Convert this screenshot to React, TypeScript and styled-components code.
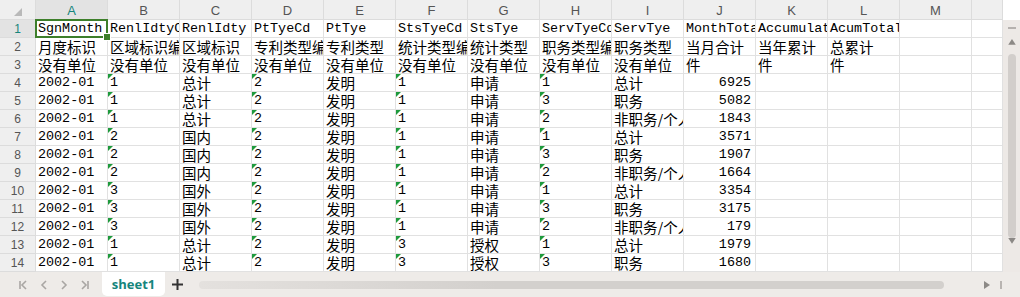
import React from 'react';
import styled, { createGlobalStyle, css } from 'styled-components';

const GlobalStyle = createGlobalStyle`
  html, body { margin: 0; padding: 0; background: #fff; }
  body { width: 1020px; height: 297px; overflow: hidden; }
`;

const COLS = ['A', 'B', 'C', 'D', 'E', 'F', 'G', 'H', 'I', 'J', 'K', 'L', 'M'];
const GRID_LINE = '#e1e1e1';
const TEAL = '#16857c';

// which columns hold numbers stored as text (green corner marks)
const TEXT_NUM_COLS = [1, 3, 5, 7];

const rows: string[][] = [
    ['SgnMonth', 'RenlIdtyCd', 'RenlIdty', 'PtTyeCd', 'PtTye', 'StsTyeCd', 'StsTye', 'ServTyeCd', 'ServTye', 'MonthTotal', 'Accumulated', 'AcumTotal', ''],
    ['月度标识', '区域标识编码', '区域标识', '专利类型编码', '专利类型', '统计类型编码', '统计类型', '职务类型编码', '职务类型', '当月合计', '当年累计', '总累计', ''],
    ['没有单位', '没有单位', '没有单位', '没有单位', '没有单位', '没有单位', '没有单位', '没有单位', '没有单位', '件', '件', '件', ''],
    ['2002-01', '1', '总计', '2', '发明', '1', '申请', '1', '总计', '6925', '', '', ''],
    ['2002-01', '1', '总计', '2', '发明', '1', '申请', '3', '职务', '5082', '', '', ''],
    ['2002-01', '1', '总计', '2', '发明', '1', '申请', '2', '非职务/个人', '1843', '', '', ''],
    ['2002-01', '2', '国内', '2', '发明', '1', '申请', '1', '总计', '3571', '', '', ''],
    ['2002-01', '2', '国内', '2', '发明', '1', '申请', '3', '职务', '1907', '', '', ''],
    ['2002-01', '2', '国内', '2', '发明', '1', '申请', '2', '非职务/个人', '1664', '', '', ''],
    ['2002-01', '3', '国外', '2', '发明', '1', '申请', '1', '总计', '3354', '', '', ''],
    ['2002-01', '3', '国外', '2', '发明', '1', '申请', '3', '职务', '3175', '', '', ''],
    ['2002-01', '3', '国外', '2', '发明', '1', '申请', '2', '非职务/个人', '179', '', '', ''],
    ['2002-01', '1', '总计', '2', '发明', '3', '授权', '1', '总计', '1979', '', '', ''],
    ['2002-01', '1', '总计', '2', '发明', '3', '授权', '3', '职务', '1680', '', '', ''],
];

const Page = styled.div`
  width: 1020px;
  height: 297px;
  display: flex;
  flex-direction: column;
  font-family: "Liberation Sans", "Noto Sans", sans-serif;
`;

const Body = styled.div`
  display: flex;
  height: 272px;
`;

const Sheet = styled.div`
  flex: 1;
  display: grid;
  grid-template-columns: 36px repeat(13, 72px) 31px;
  grid-template-rows: 20px repeat(14, 18px);
  overflow: hidden;
`;

const Corner = styled.div`
  background: #efefef;
  border-right: 1px solid #dcdcdc;
  border-bottom: 1px solid #dcdcdc;
  display: flex;
  align-items: center;
  justify-content: center;
  svg { margin: 4px 0 0 0; }
`;

const ColHead = styled.div<{ $active?: boolean }>`
  box-sizing: border-box;
  background: ${p => (p.$active ? '#e3e3e3' : '#efefef')};
  color: ${p => (p.$active ? TEAL : '#555')};
  border-right: 1px solid #dcdcdc;
  border-bottom: 1px solid #dcdcdc;
  font-size: 13px;
  display: flex;
  align-items: center;
  justify-content: center;
  padding-top: 1px;
`;

const RowHead = styled.div<{ $active?: boolean }>`
  box-sizing: border-box;
  background: ${p => (p.$active ? '#e3e3e3' : '#efefef')};
  color: ${p => (p.$active ? TEAL : '#555')};
  border-right: 1px solid #dcdcdc;
  border-bottom: 1px solid #dcdcdc;
  font-size: 12px;
  display: flex;
  align-items: center;
  justify-content: center;
`;

const Cell = styled.div<{ $cjk?: boolean; $right?: boolean; $flag?: boolean }>`
  position: relative;
  box-sizing: border-box;
  height: 18px;
  border-right: 1px solid ${GRID_LINE};
  border-bottom: 1px solid ${GRID_LINE};
  padding: 1px 4px 0 2px;
  display: flex;
  align-items: center;
  justify-content: ${p => (p.$right ? 'flex-end' : 'flex-start')};
  white-space: nowrap;
  overflow: hidden;
  color: #000;
  line-height: 1;
  font-family: ${p => (p.$cjk
        ? '"Noto Sans CJK SC", "Liberation Mono", sans-serif'
        : '"Liberation Mono", "Noto Sans CJK SC", monospace')};
  font-size: ${p => (p.$cjk ? '14.5px' : '13.4px')};
  ${p => p.$flag && css`
    &::before {
      content: '';
      position: absolute;
      left: 0;
      top: 0;
      border-top: 5px solid #1e9a3c;
      border-right: 5px solid transparent;
    }
  `}
`;

const Selected = styled.div`
  position: absolute;
  left: -1px;
  top: -1px;
  right: -1px;
  bottom: -1px;
  border: 2px solid #3d7f2a;
  pointer-events: none;
  &::after {
    content: '';
    position: absolute;
    right: -5px;
    bottom: -5px;
    width: 6px;
    height: 6px;
    background: #3d7f2a;
    border: 1px solid #fff;
  }
`;

const AnchorCell = styled(Cell)`
  overflow: visible;
  z-index: 2;
  span { display: block; overflow: hidden; }
`;

const VScroll = styled.div`
  width: 17px;
  margin-top: 20px;
  background: #ede9e6;
  display: flex;
  flex-direction: column;
  align-items: center;
`;

const Dash = styled.div`
  width: 8px;
  height: 2px;
  background: #b5b1ae;
  margin-top: 7px;
`;

const VThumb = styled.div`
  width: 8px;
  height: 196px;
  margin-top: 9px;
  border-radius: 4px;
  background: #d2cecb;
`;

const TabBar = styled.div`
  height: 25px;
  background: #eeebe8;
  display: flex;
  align-items: flex-start;
`;

const NavGroup = styled.div`
  width: 102px;
  height: 25px;
  display: flex;
  align-items: center;
  padding-left: 14px;
  box-sizing: border-box;
`;

const NavBtn = styled.div`
  width: 20px;
  height: 20px;
  display: flex;
  align-items: center;
  justify-content: center;
`;

const Tab = styled.div`
  width: 63px;
  height: 24px;
  background: #fff;
  border-radius: 0 0 5px 5px;
  color: ${TEAL};
  font-family: "Open Sans", "Noto Sans", sans-serif;
  font-weight: 700;
  font-size: 13px;
  display: flex;
  align-items: center;
  justify-content: center;
`;

const AddTab = styled.div`
  width: 24px;
  height: 25px;
  display: flex;
  align-items: center;
  justify-content: center;
`;

const HTrack = styled.div`
  flex: 1;
  height: 25px;
  display: flex;
  align-items: center;
  padding-left: 10px;
`;

const HThumb = styled.div`
  width: 745px;
  height: 8px;
  border-radius: 4px;
  background: linear-gradient(to right, #e4e1de 0%, #d3d0cd 40%, #d3d0cd 100%);
`;

const HEnd = styled.div`
  width: 55px;
  display: flex;
  align-items: center;
  justify-content: flex-end;
  gap: 10px;
  padding-right: 18px;
  height: 25px;
`;

const Bar = styled.div`
  width: 2px;
  height: 8px;
  background: #b8b4b1;
`;

const Chevron = ({ dir, bar }: { dir: 'l' | 'r'; bar?: boolean }) => (
    <svg width="12" height="12" viewBox="0 0 12 12">
        {dir === 'l' ? (
            <>
                {bar && <line x1="2" y1="2" x2="2" y2="10" stroke="#a9a6a3" strokeWidth="1.6" />}
                <polyline points="8,2 4,6 8,10" fill="none" stroke="#a9a6a3" strokeWidth="1.6" />
            </>
        ) : (
            <>
                <polyline points="4,2 8,6 4,10" fill="none" stroke="#a9a6a3" strokeWidth="1.6" />
                {bar && <line x1="10" y1="2" x2="10" y2="10" stroke="#a9a6a3" strokeWidth="1.6" />}
            </>
        )}
    </svg>
);

const hasCjk = (s: string) => /[\u4e00-\u9fff]/.test(s);

export default function App() {
    return (
        <Page>
            <GlobalStyle />
            <Body>
                <Sheet>
                    <Corner>
                        <svg width="8" height="8" viewBox="0 0 8 8"><polygon points="8,0 8,8 0,8" fill="#b9b9b9" /></svg>
                    </Corner>
                    {COLS.map((c, i) => <ColHead key={c} $active={i === 0}>{c}</ColHead>)}
                    <ColHead />
                    {rows.map((row, r) => (
                        <React.Fragment key={r}>
                            <RowHead $active={r === 0}>{r + 1}</RowHead>
                            {row.map((v, c) => {
                                if (r === 0 && c === 0) {
                                    return (
                                        <AnchorCell key={c}>
                                            <span>{v}</span>
                                            <Selected />
                                        </AnchorCell>
                                    );
                                }
                                const isData = r >= 3;
                                return (
                                    <Cell
                                        key={c}
                                        $cjk={hasCjk(v)}
                                        $right={isData && c === 9}
                                        $flag={isData && TEXT_NUM_COLS.includes(c)}
                                    >
                                        {v}
                                    </Cell>
                                );
                            })}
                            <Cell />
                        </React.Fragment>
                    ))}
                </Sheet>
                <VScroll>
                    <Dash />
                    <svg width="8" height="6" viewBox="0 0 8 6" style={{ marginTop: 10 }}><polygon points="4,0 8,6 0,6" fill="#8c8986" /></svg>
                    <VThumb />
                    <div style={{ flex: 1 }} />
                    <svg width="8" height="6" viewBox="0 0 8 6" style={{ marginBottom: 28 }}><polygon points="0,0 8,0 4,6" fill="#8c8986" /></svg>
                </VScroll>
            </Body>
            <TabBar>
                <NavGroup>
                    <NavBtn><Chevron dir="l" bar /></NavBtn>
                    <NavBtn><Chevron dir="l" /></NavBtn>
                    <NavBtn><Chevron dir="r" /></NavBtn>
                    <NavBtn><Chevron dir="r" bar /></NavBtn>
                </NavGroup>
                <Tab>sheet1</Tab>
                <AddTab>
                    <svg width="11" height="11" viewBox="0 0 11 11">
                        <path d="M5.5 0v11M0 5.5h11" stroke="#333" strokeWidth="2" />
                    </svg>
                </AddTab>
                <HTrack><HThumb /></HTrack>
                <HEnd>
                    <svg width="6" height="8" viewBox="0 0 6 8"><polygon points="0,0 6,4 0,8" fill="#8c8986" /></svg>
                    <Bar />
                </HEnd>
            </TabBar>
        </Page>
    );
}
